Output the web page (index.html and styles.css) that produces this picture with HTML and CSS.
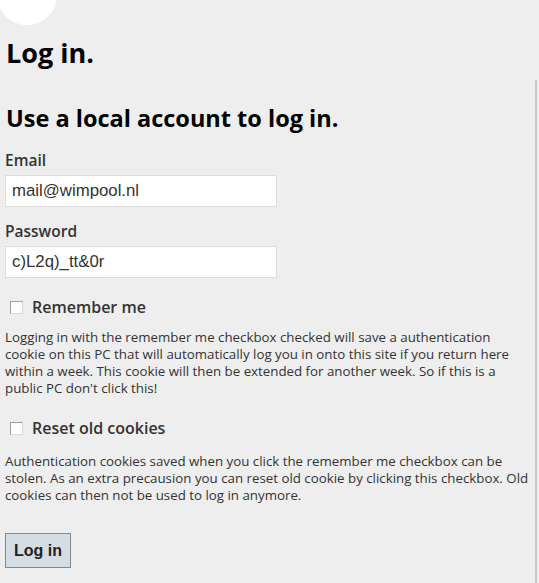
FILE: index.html
```html
<!DOCTYPE html>
<html>
<head>
<meta charset="utf-8">
<link rel="stylesheet" href="styles.css">
</head>
<body>
<div class="logo"></div>
<h1 class="title">Log in.</h1>
<section class="panel">
  <h2 class="subtitle">Use a local account to log in.</h2>
  <form class="form">
    <label class="field-label field-label-first" for="email">Email</label>
    <input class="field-input" id="email" type="text" value="mail@wimpool.nl">
    <label class="field-label" for="password">Password</label>
    <input class="field-input" id="password" type="text" value="c)L2q)_tt&amp;0r">
    <label class="check check-remember"><input type="checkbox" class="check-box"><span>Remember me</span></label>
    <p class="note">Logging in with the remember me checkbox checked will save a authentication cookie on this PC that will automatically log you in onto this site if you return here within a week. This cookie will then be extended for another week. So if this is a public PC don't click this!</p>
    <label class="check check-reset"><input type="checkbox" class="check-box"><span>Reset old cookies</span></label>
    <p class="note note-reset">Authentication cookies saved when you click the remember me checkbox can be stolen. As an extra precausion you can reset old cookie by clicking this checkbox. Old cookies can then not be used to log in anymore.</p>
    <button type="button" class="submit">Log in</button>
  </form>
</section>
</body>
</html>
```
FILE: styles.css
```css
html, body {
  margin: 0;
  padding: 0;
  background: #eeeeee;
  height: 100%;
}
body {
  font-family: "Open Sans", "Noto Sans", sans-serif;
  color: #333;
  position: relative;
  overflow: hidden;
}
.logo {
  position: absolute;
  left: -3px;
  top: -35px;
  width: 60px;
  height: 60px;
  border-radius: 50%;
  background: #ffffff;
}
.title {
  margin: 0;
  padding: 36px 0 0 6px;
  font-size: 27px;
  line-height: 34px;
  font-weight: 700;
  color: #000;
}
.panel {
  margin: 10px 2px 0 0;
  border-right: 2px solid #c8c8c8;
  padding: 0 5px 0 5px;
  box-sizing: border-box;
  min-height: calc(100vh - 80px);
}
.subtitle {
  margin: 0;
  padding: 23px 0 0 1px;
  font-size: 23.5px;
  line-height: 30px;
  font-weight: 700;
  color: #000;
}
.form {
  display: flex;
  flex-direction: column;
  align-items: flex-start;
}
.field-label {
  font-size: 15.5px;
  font-weight: 600;
  margin-top: 14px;
  line-height: 20px;
  color: #333;
}
.field-label-first {
  margin-top: 17px;
}
.field-input {
  margin-top: 5px;
  width: 272px;
  height: 32px;
  box-sizing: border-box;
  border: 1px solid #dddddd;
  background: #fff;
  padding: 0 6px;
  font-family: "Liberation Sans", Arial, sans-serif;
  font-size: 16.8px;
  color: #333;
  outline: none;
}
.check {
  display: flex;
  align-items: center;
  gap: 9px;
  font-size: 16px;
  font-weight: 600;
  line-height: 22px;
}
.check-remember {
  margin-top: 18px;
}
.check-reset {
  margin-top: 20px;
}
.check-box {
  appearance: none;
  -webkit-appearance: none;
  margin: 0 0 0 5px;
  width: 13px;
  height: 13px;
  box-sizing: border-box;
  border: 1px solid #a0a0a0;
  border-right-color: #d8d8d8;
  border-bottom-color: #d8d8d8;
  background: #fff;
}
.note {
  margin: 11px 0 0 0;
  font-size: 13.3px;
  line-height: 17px;
  color: #333;
}
.note-reset {
  margin-top: 14px;
}
.submit {
  margin-top: 29px;
  width: 66px;
  height: 35px;
  background: #d5dde4;
  border: 1px solid #888;
  font-family: "Liberation Sans", Arial, sans-serif;
  font-weight: 700;
  font-size: 16px;
  color: #222;
  padding: 0;
}
```
